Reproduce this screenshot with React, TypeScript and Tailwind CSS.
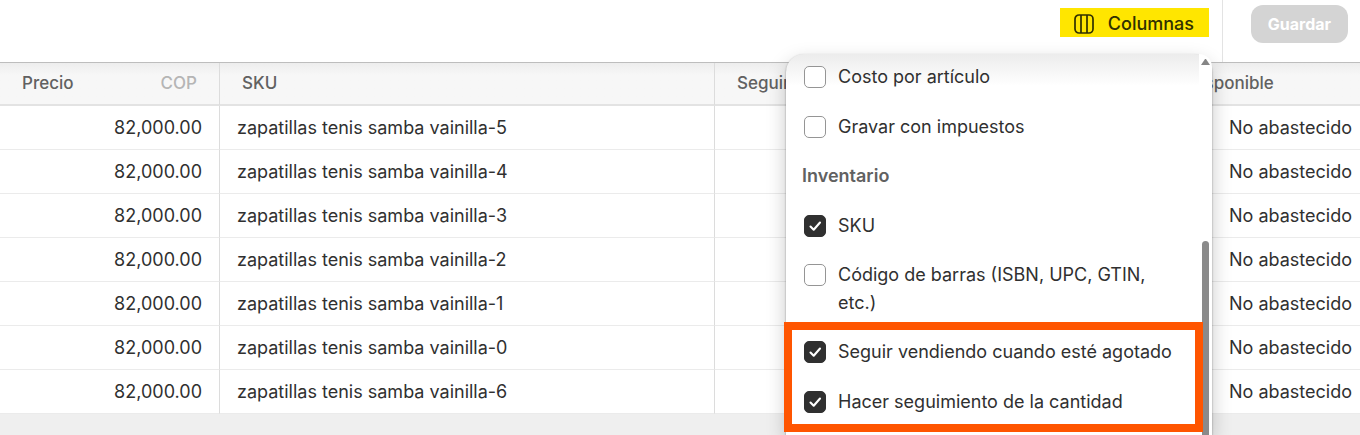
interface Variant {
  price: string
  sku: string
  available: string
}

interface ColumnOption {
  id: string
  label: string
  checked: boolean
}

const VARIANTS: Variant[] = ['5', '4', '3', '2', '1', '0', '6'].map(n => ({
  price: '82,000.00',
  sku: `zapatillas tenis samba vainilla-${n}`,
  available: 'No abastecido',
}))

const PRICE_OPTIONS: ColumnOption[] = [
  { id: 'cost',  label: 'Costo por artículo',   checked: false },
  { id: 'taxes', label: 'Gravar con impuestos', checked: false },
]

const INVENTORY_OPTIONS: ColumnOption[] = [
  { id: 'sku',     label: 'SKU', checked: true },
  { id: 'barcode', label: 'Código de barras (ISBN, UPC, GTIN, etc.)', checked: false },
]

const STOCK_OPTIONS: ColumnOption[] = [
  { id: 'oversell', label: 'Seguir vendiendo cuando esté agotado', checked: true },
  { id: 'track',    label: 'Hacer seguimiento de la cantidad',     checked: true },
]

function ColumnsIcon() {
  return (
    <svg width="20" height="20" viewBox="0 0 20 20" fill="none" stroke="currentColor" strokeWidth="1.7" aria-hidden="true">
      <rect x="1" y="1" width="18" height="18" rx="4" />
      <path d="M7 1v18M13 1v18" />
    </svg>
  )
}

function OptionRow({ option }: { option: ColumnOption }) {
  return (
    <label htmlFor={option.id} className="flex items-start gap-3 text-[18px] leading-7">
      <span className="grid shrink-0 pt-[3px]">
        <input
          id={option.id}
          type="checkbox"
          defaultChecked={option.checked}
          className="peer col-start-1 row-start-1 size-[22px] appearance-none rounded-[5px] border border-[#959595] bg-white checked:border-[#303030] checked:bg-[#303030]"
        />
        <svg
          className="pointer-events-none invisible col-start-1 row-start-1 size-[22px] peer-checked:visible"
          viewBox="0 0 22 22"
          fill="none"
          stroke="white"
          strokeWidth="2.1"
          strokeLinecap="round"
          strokeLinejoin="round"
          aria-hidden="true"
        >
          <path d="M6.5 11.5l3.2 3.2L16 7.5" />
        </svg>
      </span>
      <span>{option.label}</span>
    </label>
  )
}

function Toolbar() {
  return (
    <header className="flex justify-end border-b border-[#bdbdbd] bg-white">
      <div className="border-r border-[#e3e3e3] pt-2 pr-[13px] pb-[25px]">
        <button type="button" className="flex h-[29px] items-center gap-[14px] bg-[#ffe600] pt-0.5 pr-[15px] pl-[14px] text-[18px] font-medium text-[#303000]">
          <ColumnsIcon />
          Columnas
        </button>
      </div>
      <div className="pt-[5px] pr-3 pl-7">
        <button type="button" className="h-[38px] w-[97px] rounded-xl bg-[#d4d4d4] text-base font-bold text-white">
          Guardar
        </button>
      </div>
    </header>
  )
}

function ColumnPicker() {
  return (
    <div className="absolute top-[54px] right-[148px] bottom-0 w-[426px] rounded-t-[18px] bg-white bg-linear-to-b from-[#ececec] to-white to-[32px] shadow-[0_1px_2px_rgba(0,0,0,0.4),0_8px_20px_rgba(0,0,0,0.22)]">
      {/* scroll track */}
      <div className="absolute inset-y-0 right-0 flex w-[13px] flex-col items-center rounded-tr-[18px] bg-white pt-[5px]">
        <svg width="9" height="6" viewBox="0 0 9 6" fill="#858585" aria-hidden="true">
          <path d="M3.7.4a1 1 0 0 1 1.6 0L9 6H0z" />
        </svg>
        <div className="mt-44 w-[7px] flex-1 rounded-t-full bg-[#8a8a8a]" />
      </div>

      <div className="flex flex-col gap-[21px] pt-[9px] pr-10 pl-[18px]">
        <div className="flex flex-col gap-[22px]">
          {PRICE_OPTIONS.map(o => <OptionRow key={o.id} option={o} />)}
        </div>
        <section className="flex flex-col gap-[21px]">
          <h2 className="-ml-0.5 pb-px text-[18px] leading-7 font-semibold text-[#616161]">Inventario</h2>
          {INVENTORY_OPTIONS.map(o => <OptionRow key={o.id} option={o} />)}
        </section>
        <div className="relative flex flex-col gap-[22px]">
          {STOCK_OPTIONS.map(o => <OptionRow key={o.id} option={o} />)}
          <div className="pointer-events-none absolute -top-4 -right-[31px] -bottom-4 -left-5 border-8 border-[#ff5500]" />
        </div>
      </div>
    </div>
  )
}

export default function App() {
  return (
    <div className="relative min-h-screen overflow-hidden bg-[#efefef] font-['Inter',sans-serif] text-[#303030]">
      <Toolbar />

      <table className="w-full table-fixed border-separate border-spacing-0 bg-white text-[18px]">
        <colgroup>
          <col className="w-[220px]" />
          <col className="w-[495px]" />
          <col className="w-[451px]" />
          <col />
        </colgroup>
        <thead className="text-left text-[17px] leading-6 text-[#616161]">
          <tr className="h-[43px] bg-[#f7f7f7] bg-linear-to-b from-[#ededed] to-[#f7f7f7] to-[12px]">
            <th className="border-r border-b-2 border-r-[#dcdcdc] border-b-[#e3e3e3] px-[22px] pb-0.5 font-medium">
              <div className="flex justify-between">
                Precio
                <span className="text-[#b5b5b5]">COP</span>
              </div>
            </th>
            <th className="border-r border-b-2 border-r-[#dcdcdc] border-b-[#e3e3e3] px-[22px] pb-0.5 font-medium">SKU</th>
            <th className="border-r border-b-2 border-r-[#dcdcdc] border-b-[#e3e3e3] px-[22px] pb-0.5 font-medium">Seguimiento</th>
            <th className="border-b-2 border-b-[#e3e3e3] px-[22px] pb-0.5 font-medium">Disponible</th>
          </tr>
        </thead>
        <tbody>
          {VARIANTS.map(v => (
            <tr key={v.sku} className="h-11">
              <td className="border-r border-b border-r-[#dcdcdc] border-b-[#ebebeb] pr-[17px] text-right">{v.price}</td>
              <td className="border-r border-b border-r-[#dcdcdc] border-b-[#ebebeb] px-[17px]">{v.sku}</td>
              <td className="border-r border-b border-r-[#dcdcdc] border-b-[#ebebeb]" />
              <td className="border-b border-b-[#ebebeb] pr-2 text-right">{v.available}</td>
            </tr>
          ))}
        </tbody>
      </table>

      <ColumnPicker />
    </div>
  )
}
